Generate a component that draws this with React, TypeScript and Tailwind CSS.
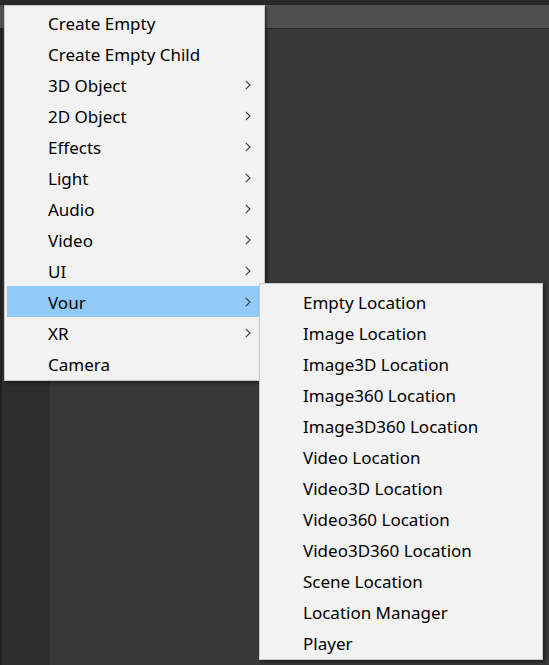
import { ChevronRight } from 'lucide-react';

const mainItems: { label: string; sub?: boolean }[] = [
  { label: 'Create Empty' },
  { label: 'Create Empty Child' },
  { label: '3D Object', sub: true },
  { label: '2D Object', sub: true },
  { label: 'Effects', sub: true },
  { label: 'Light', sub: true },
  { label: 'Audio', sub: true },
  { label: 'Video', sub: true },
  { label: 'UI', sub: true },
  { label: 'Vour', sub: true },
  { label: 'XR', sub: true },
  { label: 'Camera' },
];

const vourItems = [
  'Empty Location',
  'Image Location',
  'Image3D Location',
  'Image360 Location',
  'Image3D360 Location',
  'Video Location',
  'Video3D Location',
  'Video360 Location',
  'Video3D360 Location',
  'Scene Location',
  'Location Manager',
  'Player',
];

function Arrow() {
  return (
    <svg width="6" height="10" viewBox="0 0 6 10" className="shrink-0">
      <path d="M0.8 0.8 L5 5 L0.8 9.2" fill="none" stroke="#3c3c3c" strokeWidth="1.1" />
    </svg>
  );
}

export default function App() {
  return (
    <div
      className="relative w-[549px] h-[665px] overflow-hidden bg-[#383838] flex flex-col"
      style={{ fontFamily: '"Noto Sans", "Open Sans", sans-serif' }}
    >
      {/* Editor background */}
      <div className="h-[5px] bg-[#282828] shrink-0" />
      <div className="h-[23px] bg-[#505050] shrink-0" />
      <div className="h-px bg-[#262626] shrink-0" />
      <div className="flex flex-1">
        <div className="w-[50px] bg-[#2d2d2d] border-l-2 border-[#1e1e1e]" />
        <div className="flex-1 bg-[#383838]" />
      </div>

      {/* Context menu */}
      <div className="absolute left-[4px] top-[5px] w-[261px] bg-[#f2f2f2] border border-[#c8c8c8] px-[2px] py-px shadow-[2px_2px_3px_rgba(0,0,0,0.45)]">
        {mainItems.map((item) => (
          <div
            key={item.label}
            className={`h-[31px] flex items-center pl-[41px] pr-[11px] text-[17px] text-black ${
              item.label === 'Vour' ? 'bg-[#91c9f7]' : ''
            }`}
          >
            <span className="flex-1 leading-none pt-[2px]">{item.label}</span>
            {item.sub && <Arrow />}
          </div>
        ))}
      </div>

      {/* Vour submenu */}
      <div className="absolute left-[259px] top-[283px] w-[284px] bg-[#f2f2f2] border border-[#c8c8c8] px-[2px] pt-[2px] pb-px shadow-[2px_2px_3px_rgba(0,0,0,0.45)]">
        {vourItems.map((label) => (
          <div key={label} className="h-[31px] flex items-center pl-[41px] text-[17px] text-black">
            <span className="leading-none pt-[2px]">{label}</span>
          </div>
        ))}
      </div>
    </div>
  );
}
